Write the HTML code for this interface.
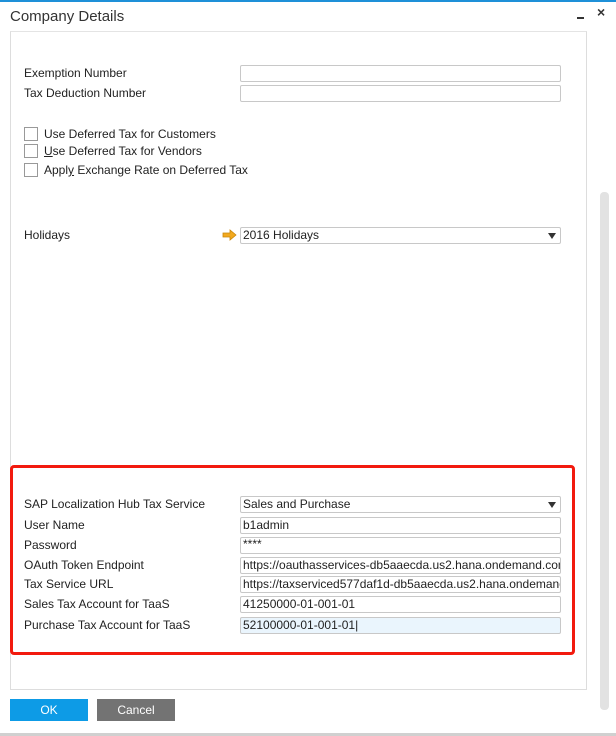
<!DOCTYPE html>
<html><head><style>
body{margin:0;width:616px;height:736px;background:#fff;position:relative;overflow:hidden;font-family:"Liberation Sans",sans-serif;font-size:12px;color:#222}
.a{position:absolute}
.lbl{position:absolute;left:24px;font-size:12px;line-height:16px}
.f{position:absolute;left:240px;width:317px;height:15px;border:1px solid #c8c8c8;border-radius:2px;background:#fff;font-size:12px;line-height:15px;padding-left:2px;box-sizing:content-box;white-space:nowrap;overflow:hidden}
.cb{position:absolute;left:24px;width:12px;height:12px;border:1px solid #999;background:#fff}
.dd{position:absolute;right:4px;top:5px;width:0;height:0;border-left:4px solid transparent;border-right:4px solid transparent;border-top:6px solid #333}
</style></head><body>
<div class="a" style="left:0;top:0;width:616px;height:2px;background:#1e90d8"></div>
<div class="a" style="left:10px;top:8px;font-size:15px;color:#333">Company Details</div>
<div class="a" style="left:577px;top:17px;width:7px;height:2px;background:#333"></div>
<div class="a" style="left:597px;top:4px;font-size:14px;font-weight:bold;color:#333">×</div>
<div class="a" style="left:10px;top:31px;width:575px;height:657px;border:1px solid #ddd;border-top:1px solid #e4e4e4"></div>
<div class="a" style="left:600px;top:192px;width:9px;height:518px;background:#e2e2e2;border-radius:4px"></div>

<div class="lbl" style="top:65px">Exemption Number</div><div class="f" style="top:65px"></div>
<div class="lbl" style="top:85px">Tax Deduction Number</div><div class="f" style="top:85px"></div>

<div class="cb" style="top:127px"></div><div class="lbl" style="left:44px;top:126px">Use Deferred Tax for Customers</div>
<div class="cb" style="top:144px"></div><div class="lbl" style="left:44px;top:143px"><u>U</u>se Deferred Tax for Vendors</div>
<div class="cb" style="top:163px"></div><div class="lbl" style="left:44px;top:162px">Appl<u>y</u> Exchange Rate on Deferred Tax</div>

<div class="lbl" style="top:227px">Holidays</div>
<svg class="a" style="left:222px;top:229px" width="16" height="12"><path d="M1 4h7V1l6 5-6 5V8H1z" fill="#f2a91e" stroke="#c8860a" stroke-width="0.8"/></svg>
<div class="f" style="top:227px">2016 Holidays<div class="dd"></div></div>

<div class="a" style="left:10px;top:465px;width:559px;height:184px;border:3.5px solid #f21a0e;border-radius:4px"></div>
<div class="lbl" style="top:496px">SAP Localization Hub Tax Service</div><div class="f" style="top:496px">Sales and Purchase<div class="dd"></div></div>
<div class="lbl" style="top:517px">User Name</div><div class="f" style="top:517px">b1admin</div>
<div class="lbl" style="top:537px">Password</div><div class="f" style="top:537px;line-height:12px">****</div>
<div class="lbl" style="top:557px">OAuth Token Endpoint</div><div class="f" style="top:557px">https://oauthasservices-db5aaecda.us2.hana.ondemand.com</div>
<div class="lbl" style="top:576px">Tax Service URL</div><div class="f" style="top:576px">https://taxserviced577daf1d-db5aaecda.us2.hana.ondemand.com</div>
<div class="lbl" style="top:596px">Sales Tax Account for TaaS</div><div class="f" style="top:596px">41250000-01-001-01</div>
<div class="lbl" style="top:617px">Purchase Tax Account for TaaS</div><div class="f" style="top:617px;background:#eaf5fd">52100000-01-001-01|</div>

<div class="a" style="left:10px;top:699px;width:78px;height:22px;background:#0d9be6;color:#fff;text-align:center;line-height:22px">OK</div>
<div class="a" style="left:97px;top:699px;width:78px;height:22px;background:#737373;color:#fff;text-align:center;line-height:22px">Cancel</div>
<div class="a" style="left:0;top:733px;width:616px;height:3px;background:#d0d0d0"></div>
</body></html>
